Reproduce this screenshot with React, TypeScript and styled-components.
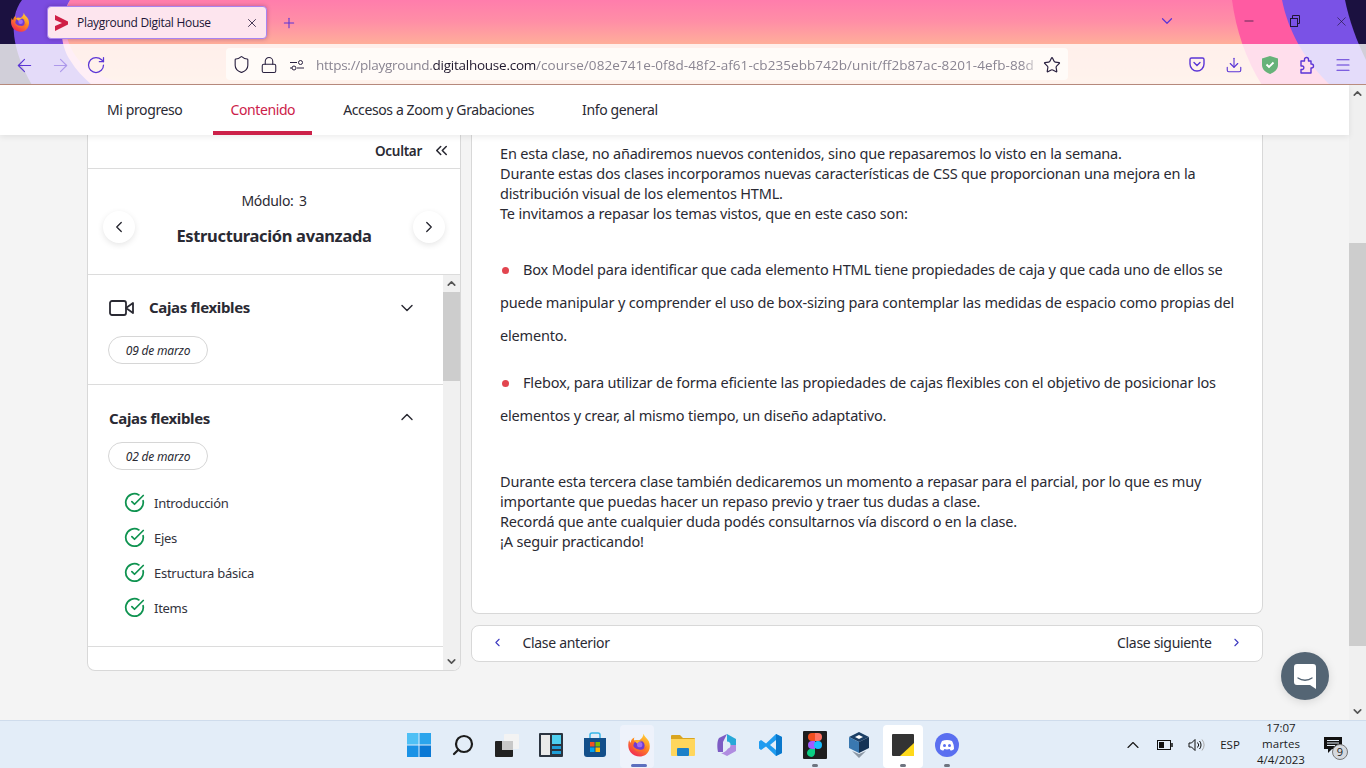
import React from 'react';
import styled, { createGlobalStyle } from 'styled-components';
import {
  ArrowLeft, ArrowRight, RotateCw, Shield, Lock, Star, Download, Menu, Plus, X, Minus,
  ChevronDown, ChevronUp, ChevronLeft, ChevronRight, ChevronsLeft, CircleCheckBig, Search,
} from 'lucide-react';

const GlobalStyle = createGlobalStyle`
  html, body { margin: 0; padding: 0; height: 100%; overflow: hidden; }
  body { font-family: 'Noto Sans', 'Open Sans', sans-serif; color: #2a2a33; background: #f4f4f4; }
  * { box-sizing: border-box; }
`;

const Screen = styled.div`
  position: relative;
  width: 1366px;
  height: 768px;
  display: flex;
  flex-direction: column;
  overflow: hidden;
`;

/* browser chrome */
const Chrome = styled.header`
  position: relative;
  height: 85px;
  flex: none;
  background: linear-gradient(180deg, #ff7dac 0%, #ff8ea6 25%, #ffae9a 52%, #ffc4a4 100%);
`;

const ThemeArt = styled.svg`
  position: absolute;
  inset: 0;
`;

const TabStrip = styled.div`
  position: relative;
  height: 44px;
  display: flex;
  align-items: center;
  padding-left: 47px;
`;

const FoxSlot = styled.div`
  position: absolute;
  left: 10px;
  top: 12px;
  width: 20px;
  height: 20px;
`;

const Tab = styled.div`
  width: 220px;
  height: 33px;
  margin-top: 1px;
  display: flex;
  align-items: center;
  padding: 0 7px 0 7px;
  background: #fde5ee;
  border: 1px solid #a884f0;
  border-radius: 4px;
  box-shadow: 0 0 4px rgba(60, 20, 90, 0.35);
  font-family: 'Open Sans', sans-serif;
  font-size: 12px;
  letter-spacing: -0.3px;
  color: #201536;
`;

const TabTitle = styled.span`
  flex: 1;
  margin-left: 9px;
`;

const NewTab = styled.div`
  display: flex;
  margin-left: 14px;
  margin-top: 1px;
  color: #5b35d6;
`;

const ListTabs = styled.div`
  display: flex;
  margin-left: 861px;
  margin-top: -2px;
  color: #5b35d6;
`;

const WindowControls = styled.div`
  position: absolute;
  right: 1px;
  top: 0;
  height: 42px;
  display: flex;
  align-items: center;
  color: #201536;
`;

const WinButton = styled.div`
  width: 46.5px;
  display: flex;
  justify-content: center;
`;

const Toolbar = styled.div`
  position: relative;
  height: 41px;
  display: flex;
  align-items: center;
  padding: 0 0 0 6px;
  background: rgba(255, 255, 255, 0.8);
  border-bottom: 1px solid #b98c7e;
`;

const NavButton = styled.div<{ $faded?: boolean }>`
  width: 36px;
  margin-top: 2px;
  display: flex;
  justify-content: center;
  color: #5b35d6;
  opacity: ${(p) => (p.$faded ? 0.4 : 1)};
`;

const UrlBar = styled.div`
  width: 842px;
  height: 32px;
  margin-left: 112px;
  display: flex;
  align-items: center;
  padding: 1px 7px 0 1px;
  background: #fffbf8;
  border-radius: 4px;
  color: #2a2140;
`;

const UrlIcon = styled.div`
  width: 28px;
  flex: none;
  display: flex;
  justify-content: center;
`;

const UrlText = styled.div`
  flex: 1;
  min-width: 0;
  margin-left: 5px;
  white-space: nowrap;
  overflow: hidden;
  font-family: 'Open Sans', sans-serif;
  font-size: 13.5px;
  letter-spacing: 0.07px;
  color: #8a8592;
  -webkit-mask-image: linear-gradient(90deg, #000 97%, transparent);
  mask-image: linear-gradient(90deg, #000 97%, transparent);
`;

const UrlOrigin = styled.span`
  letter-spacing: -0.25px;

  b {
    font-weight: 400;
    color: #20182e;
  }
`;

const ToolIcons = styled.div`
  display: flex;
  margin-top: 1px;
  margin-left: 111px;
  color: #5b35d6;
`;

const ToolIcon = styled.div`
  width: 36.5px;
  display: flex;
  justify-content: center;
`;

/* page */
const Page = styled.div`
  flex: 1;
  min-height: 0;
  display: flex;
`;

const Viewport = styled.main`
  flex: 1;
  min-width: 0;
  display: flex;
  flex-direction: column;
`;

const TopTabs = styled.nav`
  position: relative;
  z-index: 2;
  height: 50px;
  flex: none;
  display: flex;
  gap: 14px;
  padding-left: 90px;
  background: #fff;
  box-shadow: 0 2px 6px rgba(0, 0, 0, 0.08);
`;

const TopTab = styled.div<{ $active?: boolean }>`
  padding: 3px 17px 0;
  display: flex;
  align-items: center;
  font-size: 14px;
  letter-spacing: -0.39px;
  color: ${(p) => (p.$active ? '#cc2149' : '#2a2a33')};
  border-bottom: 4px solid ${(p) => (p.$active ? '#cc2149' : 'transparent')};
`;

const Columns = styled.div`
  flex: 1;
  min-height: 0;
  display: flex;
  gap: 10px;
  padding-left: 87px;
`;

const Sidebar = styled.aside`
  width: 374px;
  height: 536px;
  display: flex;
  flex-direction: column;
  background: #fff;
  border: 1px solid #d8d8d8;
  border-top: 0;
  border-radius: 0 0 8px 8px;
  overflow: hidden;
`;

const HideRow = styled.div`
  height: 34px;
  flex: none;
  display: flex;
  align-items: center;
  justify-content: flex-end;
  gap: 10px;
  padding: 0 9px 2px 0;
  border-bottom: 1px solid #dcdcdc;
  font-size: 13.5px;
  font-weight: 600;
  letter-spacing: -0.3px;
`;

const ModuleBox = styled.section`
  height: 106px;
  flex: none;
  display: flex;
  align-items: center;
  justify-content: space-between;
  padding: 0 15px 0 15px;
  border-bottom: 1px solid #dcdcdc;
`;

const ModuleText = styled.div`
  display: flex;
  flex-direction: column;
  align-items: center;
  gap: 14px;
  margin-top: -5px;
`;

const ModuleLabel = styled.div`
  font-size: 14px;
  letter-spacing: -0.3px;
  word-spacing: 2px;
`;

const ModuleName = styled.div`
  font-size: 16.5px;
  font-weight: 700;
  letter-spacing: -0.35px;
`;

const RoundButton = styled.div`
  width: 32px;
  height: 32px;
  margin-top: 11px;
  flex: none;
  display: flex;
  align-items: center;
  justify-content: center;
  border-radius: 50%;
  background: #fff;
  box-shadow: 0 2px 6px rgba(0, 0, 0, 0.1);
  color: #2a2a33;
`;

const ListArea = styled.div`
  flex: 1;
  min-height: 0;
  display: flex;
`;

const Accordion = styled.div`
  flex: 1;
  min-width: 0;
  overflow: hidden;
`;

const AccItem = styled.div<{ $height: number; $top: number }>`
  height: ${(p) => p.$height}px;
  padding: ${(p) => p.$top}px 26px 0 21px;
  border-bottom: 1px solid #dcdcdc;
`;

const AccHead = styled.div`
  height: 24px;
  display: flex;
  align-items: center;
  gap: 14px;
`;

const AccTitle = styled.div`
  flex: 1;
  font-size: 15px;
  font-weight: 700;
  letter-spacing: -0.33px;
  margin-top: -3px;
`;

const Caret = styled.div<{ $up?: boolean }>`
  display: flex;
  margin-top: ${(p) => (p.$up ? -4 : 0)}px;
`;

const DatePill = styled.div<{ $gap: number }>`
  width: 100px;
  height: 28px;
  margin: ${(p) => p.$gap}px 0 0 -1px;
  display: flex;
  align-items: center;
  justify-content: center;
  border: 1px solid #d6d6d6;
  border-radius: 14px;
  font-size: 12px;
  font-style: italic;
  letter-spacing: -0.2px;
`;

const Lessons = styled.ul`
  list-style: none;
  margin: 15px 0 0;
  padding: 0 0 0 15px;
`;

const Lesson = styled.li`
  height: 35px;
  display: flex;
  align-items: center;
  gap: 9px;
  font-size: 13px;
  letter-spacing: -0.28px;
  color: #33333d;
`;

const Track = styled.div<{ $width: number }>`
  width: ${(p) => p.$width}px;
  flex: none;
  display: flex;
  flex-direction: column;
  background: #f0f0f0;
`;

const Arrow = styled.div`
  height: 17px;
  flex: none;
  display: flex;
  align-items: center;
  justify-content: center;
  color: #555;
`;

const Thumb = styled.div<{ $top: number; $height: number }>`
  height: ${(p) => p.$height}px;
  margin-top: ${(p) => p.$top}px;
  flex: none;
  background: #cdcdcd;
`;

const Spacer = styled.div`
  flex: 1;
`;

const Content = styled.div`
  width: 792px;
  display: flex;
  flex-direction: column;
  gap: 11px;
`;

const Card = styled.article`
  height: 479px;
  flex: none;
  padding: 8px 26px 0 28px;
  background: #fff;
  border: 1px solid #d8d8d8;
  border-top: 0;
  border-radius: 0 0 8px 8px;
  font-size: 14.5px;
  line-height: 20px;
  letter-spacing: -0.18px;
`;

const Paragraph = styled.p<{ $after: number }>`
  margin: 0 0 ${(p) => p.$after}px;
`;

const BulletList = styled.ul`
  list-style: none;
  margin: 0 0 39px;
  padding: 0;
`;

const BulletItem = styled.li`
  line-height: 33px;
  margin-bottom: 14px;

  &::before {
    content: '';
    display: inline-block;
    width: 7px;
    height: 7px;
    margin: 0 14px 1px 2px;
    border-radius: 50%;
    background: #e2454f;
  }
`;

const Pager = styled.div`
  width: 792px;
  height: 37px;
  flex: none;
  display: flex;
  align-items: center;
  justify-content: space-between;
  padding: 0 19px 2px;
  background: #fff;
  border: 1px solid #d8d8d8;
  border-radius: 8px;
  font-size: 14px;
  letter-spacing: -0.32px;
`;

const PagerLink = styled.div`
  display: flex;
  align-items: center;
  gap: 18.5px;
  color: #2a2a33;

  svg {
    color: #3d3ac0;
  }
`;

const ChatBubble = styled.div`
  position: absolute;
  left: 1281px;
  top: 652px;
  width: 48px;
  height: 48px;
  display: flex;
  align-items: center;
  justify-content: center;
  border-radius: 50%;
  background: #546574;
  box-shadow: 0 2px 10px rgba(0, 0, 0, 0.12);
`;

/* taskbar */
const Taskbar = styled.footer`
  height: 48px;
  flex: none;
  position: relative;
  display: flex;
  justify-content: center;
  background: #e3edf8;
  border-top: 1px solid #cfdcec;
`;

const TaskIcons = styled.div`
  display: flex;
  align-items: stretch;
`;

const TaskIcon = styled.div<{ $state?: 'focus' | 'white' }>`
  position: relative;
  width: 44px;
  display: flex;
  align-items: center;
  justify-content: center;

  &::before {
    content: '';
    display: ${(p) => (p.$state ? 'block' : 'none')};
    position: absolute;
    left: ${(p) => (p.$state === 'focus' ? 3 : 2)}px;
    right: ${(p) => (p.$state === 'focus' ? 7 : 2)}px;
    top: 4px;
    bottom: 0;
    border-radius: 4px;
    background: ${(p) => (p.$state === 'focus' ? '#eef2fb' : '#fff')};
  }

  svg {
    position: relative;
  }
`;

const MirrorSearch = styled(Search)`
  transform: scaleX(-1);
`;

const RunDot = styled.span<{ $wide?: boolean }>`
  position: absolute;
  left: 50%;
  bottom: 1px;
  width: ${(p) => (p.$wide ? 16 : 6)}px;
  height: 3px;
  transform: translateX(-50%);
  border-radius: 2px;
  background: ${(p) => (p.$wide ? '#5c6fbf' : '#6e7480')};
`;

const Tray = styled.div`
  position: absolute;
  right: 13px;
  top: 0;
  bottom: 0;
  display: flex;
  align-items: center;
  font-family: 'Open Sans', sans-serif;
  font-size: 11.5px;
  color: #1b1b1b;
`;

const TrayIcon = styled.div<{ $width: number }>`
  width: ${(p) => p.$width}px;
  display: flex;
  justify-content: center;
`;

const Clock = styled.div`
  width: 64px;
  margin-top: -1px;
  text-align: center;
  line-height: 16px;
`;

const Notify = styled.div`
  position: relative;
  width: 40px;
  height: 16px;
  display: flex;
  justify-content: center;
`;

const NotifyCount = styled.span`
  position: absolute;
  left: 19px;
  top: 7px;
  width: 16px;
  height: 16px;
  display: flex;
  align-items: center;
  justify-content: center;
  border: 1px solid #777;
  border-radius: 50%;
  background: #d5d9df;
  font-size: 11px;
`;

const ScrollBar = ({ width, top, height }: { width: number; top: number; height: number }) => (
  <Track $width={width}>
    <Arrow><ChevronUp size={13} strokeWidth={3} /></Arrow>
    <Thumb $top={top} $height={height} />
    <Spacer />
    <Arrow><ChevronDown size={13} strokeWidth={3} /></Arrow>
  </Track>
);

const FirefoxLogo = ({ size, uid }: { size: number; uid: string }) => (
  <svg width={size} height={size} viewBox="0 0 32 32">
    <defs>
      <linearGradient id={uid} x1="0.8" y1="0" x2="0.2" y2="1">
        <stop offset="0" stopColor="#ffd23a" />
        <stop offset="0.45" stopColor="#ff8a1f" />
        <stop offset="1" stopColor="#f01f5a" />
      </linearGradient>
    </defs>
    <path d="M22 1c1 4 5 6 7 10 3 7 1 14-4 18-6 4-15 3-20-3C1 21 1 14 3 9c0 2 1 3 2 4 0-3 2-6 5-7-1 2-1 3 0 4 2-1 4-1 6 0 3-2 6-5 6-9z" fill={`url(#${uid})`} />
    <circle cx="16" cy="17" r="7.5" fill="#6f3bd1" />
    <circle cx="17" cy="15.5" r="3.6" fill="#a06cf0" />
    <path d="M7 16c1 7 8 11 14 8 3-1 5-4 5-7-2 4-6 6-10 5-4 0-7-3-9-6z" fill="#ff6b2a" />
    <path d="M10 10c3-1 7-1 10 1-3 0-5 1-6 3-2-1-3-2-4-4z" fill="#ffb52e" />
  </svg>
);

const Sticky = () => (
  <svg width="22" height="22" viewBox="0 0 22 22">
    <rect width="22" height="22" rx="1" fill="#333" />
    <path d="M22 9v13H8z" fill="#ffd91a" />
  </svg>
);

export default function App() {
  return (
    <Screen>
      <GlobalStyle />
      <Chrome>
        <ThemeArt width="1366" height="85" viewBox="0 0 1366 85">
          <path d="M70 0C64 12 62 30 72 50c8 16 26 28 58 35H0V0z" fill="#ffb0d2" />
          <path d="M70 0C58 20 60 45 70 60c6 10 14 18 22 25H0V0z" fill="#7b4ce0" />
          <path d="M22 0C8 18 12 50 32 85H0V0z" fill="#1b1140" />
          <path d="M1232 0c4 30 14 60 30 85h104V0z" fill="#ff5ba2" />
          <path d="M1282 0c6 30 22 60 48 85h36V0z" fill="#7a52e6" />
          <path d="M1345 0c4 20 12 42 21 60V0z" fill="#1b1140" />
        </ThemeArt>
        <TabStrip>
          <FoxSlot><FirefoxLogo size={20} uid="fox-top" /></FoxSlot>
          <Tab>
            <svg width="13" height="16" viewBox="0 0 13 16">
              <path d="M0 0l13 6.500v3L0 16v-5l7-3-7-3z" fill="#cf1f45" />
            </svg>
            <TabTitle>Playground Digital House</TabTitle>
            <X size={14} strokeWidth={1.4} />
          </Tab>
          <NewTab><Plus size={16} strokeWidth={1.6} /></NewTab>
          <ListTabs><ChevronDown size={18} strokeWidth={1.6} /></ListTabs>
          <WindowControls>
            <WinButton><Minus size={14} strokeWidth={1.2} /></WinButton>
            <WinButton>
              <svg width="12" height="14" viewBox="0 0 12 14" fill="none" stroke="currentColor">
                <rect x="1.500" y="4.500" width="7" height="8" />
                <path d="M3.500 4.500v-3h7v8h-2" />
              </svg>
            </WinButton>
            <WinButton><X size={15} strokeWidth={1} /></WinButton>
          </WindowControls>
        </TabStrip>
        <Toolbar>
          <NavButton><ArrowLeft size={21} strokeWidth={1.3} /></NavButton>
          <NavButton $faded><ArrowRight size={21} strokeWidth={1.3} /></NavButton>
          <NavButton><RotateCw size={20} strokeWidth={1.5} /></NavButton>
          <UrlBar>
            <UrlIcon><Shield size={19} strokeWidth={1.4} /></UrlIcon>
            <UrlIcon><Lock size={18} strokeWidth={1.4} /></UrlIcon>
            <UrlIcon>
              <svg width="14" height="12" viewBox="0 0 14 12" fill="none" stroke="currentColor">
                <path d="M0 3.500h7M0 9h2" />
                <circle cx="10.500" cy="3.500" r="2" />
                <circle cx="4" cy="9" r="2" />
                <path d="M7 9h7" />
              </svg>
            </UrlIcon>
            <UrlText>
              <UrlOrigin>https://playground.<b>digitalhouse.com</b></UrlOrigin>/course/082e741e-0f8d-48f2-af61-cb235ebb742b/unit/ff2b87ac-8201-4efb-88d
            </UrlText>
            <Star size={18} strokeWidth={1.6} />
          </UrlBar>
          <ToolIcons>
            <ToolIcon>
              <svg width="16" height="16" viewBox="0 0 16 16" fill="none" stroke="currentColor" strokeWidth="1.400">
                <path d="M2.500 2h11A1.500 1.500 0 0 1 15 3.500V8A7 7 0 0 1 1 8V3.500A1.500 1.500 0 0 1 2.500 2z" />
                <path d="M5 6.500l3 3 3-3" strokeLinecap="round" />
              </svg>
            </ToolIcon>
            <ToolIcon><Download size={18} strokeWidth={1.5} /></ToolIcon>
            <ToolIcon>
              <svg width="16" height="18" viewBox="0 0 16 18">
                <path d="M8 0l8 2.500V9c0 4-3.500 7.500-8 9-4.500-1.500-8-5-8-9V2.500z" fill="#67b279" />
                <path d="M4.500 8.500l2.500 2.500 4.500-4.500" fill="none" stroke="#fff" strokeWidth="1.800" />
              </svg>
            </ToolIcon>
            <ToolIcon>
              <svg width="16" height="18" viewBox="0 0 16 18" fill="none" stroke="currentColor" strokeWidth="1.400" strokeLinejoin="round">
                <path d="M2 5h3.500V3.500a2 2 0 0 1 4 0V5H12v3h.5a2 2 0 0 1 0 4H12v5H2v-3.500h1.500a1.800 1.800 0 0 0 0-3.500H2z" />
              </svg>
            </ToolIcon>
            <ToolIcon><Menu size={18} strokeWidth={1.5} /></ToolIcon>
          </ToolIcons>
        </Toolbar>
      </Chrome>

      <Page>
        <Viewport>
          <TopTabs>
            <TopTab>Mi progreso</TopTab>
            <TopTab $active>Contenido</TopTab>
            <TopTab>Accesos a Zoom y Grabaciones</TopTab>
            <TopTab>Info general</TopTab>
          </TopTabs>
          <Columns>
            <Sidebar>
              <HideRow>
                Ocultar
                <ChevronsLeft size={19} strokeWidth={2} />
              </HideRow>
              <ModuleBox>
                <RoundButton><ChevronLeft size={18} strokeWidth={1.8} /></RoundButton>
                <ModuleText>
                  <ModuleLabel>Módulo: 3</ModuleLabel>
                  <ModuleName>Estructuración avanzada</ModuleName>
                </ModuleText>
                <RoundButton><ChevronRight size={18} strokeWidth={1.8} /></RoundButton>
              </ModuleBox>
              <ListArea>
                <Accordion>
                  <AccItem $height={110} $top={21}>
                    <AccHead>
                      <svg width="26" height="18" viewBox="0 0 26 18" fill="none" stroke="#2a2a33" strokeWidth="1.800" strokeLinejoin="round">
                        <rect x="1" y="2" width="16" height="14" rx="2" />
                        <path d="M17 9l7-5v10z" />
                      </svg>
                      <AccTitle>Cajas flexibles</AccTitle>
                      <Caret><ChevronDown size={20} strokeWidth={1.7} /></Caret>
                    </AccHead>
                    <DatePill $gap={16}>09 de marzo</DatePill>
                  </AccItem>
                  <AccItem $height={262} $top={22}>
                    <AccHead>
                      <AccTitle>Cajas flexibles</AccTitle>
                      <Caret $up><ChevronUp size={20} strokeWidth={1.7} /></Caret>
                    </AccHead>
                    <DatePill $gap={11}>02 de marzo</DatePill>
                    <Lessons>
                      {['Introducción', 'Ejes', 'Estructura básica', 'Items'].map((name) => (
                        <Lesson key={name}>
                          <CircleCheckBig size={21} strokeWidth={2} color="#0f9350" />
                          {name}
                        </Lesson>
                      ))}
                    </Lessons>
                  </AccItem>
                </Accordion>
                <ScrollBar width={17} top={0} height={89} />
              </ListArea>
            </Sidebar>
            <Content>
              <Card>
                <Paragraph $after={30}>
                  En esta clase, no añadiremos nuevos contenidos, sino que repasaremos lo visto en la semana.<br />
                  Durante estas dos clases incorporamos nuevas características de CSS que proporcionan una mejora en la distribución visual de los elementos HTML.<br />
                  Te invitamos a repasar los temas vistos, que en este caso son:
                </Paragraph>
                <BulletList>
                  <BulletItem>Box Model para identificar que cada elemento HTML tiene propiedades de caja y que cada uno de ellos se puede manipular y comprender el uso de box-sizing para contemplar las medidas de espacio como propias del elemento.</BulletItem>
                  <BulletItem>Flebox, para utilizar de forma eficiente las propiedades de cajas flexibles con el objetivo de posicionar los elementos y crear, al mismo tiempo, un diseño adaptativo.</BulletItem>
                </BulletList>
                <Paragraph $after={0}>
                  Durante esta tercera clase también dedicaremos un momento a repasar para el parcial, por lo que es muy importante que puedas hacer un repaso previo y traer tus dudas a clase.<br />
                  Recordá que ante cualquier duda podés consultarnos vía discord o en la clase.<br />
                  ¡A seguir practicando!
                </Paragraph>
              </Card>
              <Pager>
                <PagerLink><ChevronLeft size={13} strokeWidth={2} />Clase anterior</PagerLink>
                <PagerLink>Clase siguiente<ChevronRight size={13} strokeWidth={2} /></PagerLink>
              </Pager>
            </Content>
          </Columns>
        </Viewport>
        <ScrollBar width={17} top={141} height={403} />
      </Page>

      <ChatBubble>
        <svg width="22" height="25" viewBox="0 0 22 25">
          <path d="M3 0h16a3 3 0 0 1 3 3v22l-6-4H3a3 3 0 0 1-3-3V3a3 3 0 0 1 3-3z" fill="#fff" />
          <path d="M4 14c4 3 10 3 14 0" fill="none" stroke="#546574" strokeWidth="1.300" strokeLinecap="round" />
        </svg>
      </ChatBubble>

      <Taskbar>
        <TaskIcons>
          <TaskIcon>
            <svg width="24" height="24" viewBox="0 0 24 24">
              <rect width="11.500" height="11.500" fill="#4fc0f5" />
              <rect x="12.500" width="11.500" height="11.500" fill="#2ba4ec" />
              <rect y="12.500" width="11.500" height="11.500" fill="#1a92e6" />
              <rect x="12.500" y="12.500" width="11.500" height="11.500" fill="#0b78d4" />
            </svg>
          </TaskIcon>
          <TaskIcon><MirrorSearch size={24} strokeWidth={2.2} color="#1c1c1c" /></TaskIcon>
          <TaskIcon>
            <svg width="24" height="24" viewBox="0 0 24 24">
              <rect x="9" y="1" width="15" height="15" rx="1" fill="#f3f3f3" />
              <rect x="0" y="8" width="18" height="16" rx="1" fill="#222" />
              <rect x="7" y="8" width="11" height="9" fill="#c8c8c8" />
            </svg>
          </TaskIcon>
          <TaskIcon>
            <svg width="24" height="24" viewBox="0 0 24 24">
              <rect width="24" height="24" rx="1" fill="#2b3440" />
              <rect x="2" y="2" width="9" height="20" fill="#e9e9e9" />
              <rect x="13" y="2" width="9" height="9" fill="#4fd0f0" />
              <rect x="13" y="13" width="9" height="3" fill="#1f9fd8" />
              <rect x="13" y="18" width="9" height="3" fill="#1f9fd8" />
            </svg>
          </TaskIcon>
          <TaskIcon>
            <svg width="24" height="26" viewBox="0 0 24 26">
              <path d="M7 6V3a2 2 0 0 1 2-2h6a2 2 0 0 1 2 2v3" fill="none" stroke="#38b6e8" strokeWidth="1.500" />
              <path d="M1 6h22v16a3 3 0 0 1-3 3H4a3 3 0 0 1-3-3z" fill="#134f8a" />
              <rect x="7" y="10" width="4.500" height="4.500" fill="#f25022" />
              <rect x="12.500" y="10" width="4.500" height="4.500" fill="#7fba00" />
              <rect x="7" y="15.500" width="4.500" height="4.500" fill="#00a4ef" />
              <rect x="12.500" y="15.500" width="4.500" height="4.500" fill="#ffb900" />
            </svg>
          </TaskIcon>
          <TaskIcon $state="focus">
            <FirefoxLogo size={24} uid="fox-bar" />
            <RunDot $wide />
          </TaskIcon>
          <TaskIcon>
            <svg width="24" height="24" viewBox="0 0 24 24">
              <path d="M0 3a1 1 0 0 1 1-1h8l3 3h11a1 1 0 0 1 1 1v3H0z" fill="#d9a520" />
              <path d="M0 6h24v16a1 1 0 0 1-1 1H1a1 1 0 0 1-1-1z" fill="#ffd65c" />
              <rect x="6" y="15" width="12" height="8" rx="1" fill="#1c80c8" />
            </svg>
          </TaskIcon>
          <TaskIcon>
            <svg width="22" height="24" viewBox="0 0 22 24">
              <path d="M11 1l9 5v6h-6l-3-3z" fill="#28a8d8" />
              <path d="M11 1L3 5C1 8 1 14 2 19l5 0V9z" fill="#7d5cc4" />
              <path d="M14 12h6v6l-9 5-6-3c3 0 6-2 9-8z" fill="#b08ce0" />
              <circle cx="11" cy="12" r="3.500" fill="#e3edf8" />
            </svg>
          </TaskIcon>
          <TaskIcon>
            <svg width="24" height="24" viewBox="0 0 24 24">
              <path d="M17 1l6 3v16l-6 3-10-9.500L2 17l-2-1.500v-7L2 7l5 3.500z" fill="#1f9cf0" />
              <path d="M17 7l-6 5 6 5z" fill="#e3edf8" />
              <path d="M17 1l6 3v16l-6 3z" fill="#0a78cc" />
            </svg>
          </TaskIcon>
          <TaskIcon>
            <svg width="24" height="28" viewBox="0 0 24 28">
              <rect width="24" height="28" rx="1" fill="#1e1e1e" />
              <path d="M12 2H9a4 4 0 0 0 0 8h3z" fill="#f24e1e" />
              <path d="M12 2h3a4 4 0 0 1 0 8h-3z" fill="#ff7262" />
              <path d="M12 10H9a4 4 0 0 0 0 8h3z" fill="#a259ff" />
              <circle cx="15" cy="14" r="4" fill="#1abcfe" />
              <path d="M9 18h3v4a4 4 0 1 1-3-4z" fill="#0acf83" />
            </svg>
            <RunDot />
          </TaskIcon>
          <TaskIcon>
            <svg width="22" height="28" viewBox="0 0 22 28">
              <path d="M11 1l10 5-10 5L1 6z" fill="#1c3f66" />
              <path d="M1 6l10 5v11L1 17z" fill="#3a78b0" />
              <path d="M21 6L11 11v11l10-5z" fill="#163456" />
              <path d="M4 20l7 7 7-7-7 3z" fill="#8d98a5" />
              <path d="M11 4l4 2-4 2-4-2z" fill="#fff" />
            </svg>
          </TaskIcon>
          <TaskIcon $state="white">
            <Sticky />
            <RunDot />
          </TaskIcon>
          <TaskIcon>
            <svg width="24" height="24" viewBox="0 0 24 24">
              <circle cx="12" cy="12" r="12" fill="#5a6ff0" />
              <path d="M7 8c3-1.500 7-1.500 10 0 1.500 2.500 2 5 2 8-1 1-2.500 1.500-3.500 1.500l-.8-1.500c-1.700.5-3.700.5-5.400 0l-.8 1.500C7.500 17.500 6 17 5 16c0-3 .5-5.500 2-8z" fill="#fff" />
              <circle cx="9.500" cy="12.500" r="1.500" fill="#5a6ff0" />
              <circle cx="14.500" cy="12.500" r="1.500" fill="#5a6ff0" />
            </svg>
            <RunDot />
          </TaskIcon>
        </TaskIcons>
        <Tray>
          <TrayIcon $width={32}><ChevronUp size={20} strokeWidth={1.4} /></TrayIcon>
          <TrayIcon $width={32}>
            <svg width="16" height="10" viewBox="0 0 16 10" fill="none" stroke="#111">
              <rect x="0.500" y="0.500" width="13" height="9" />
              <rect x="2" y="2" width="5" height="6" fill="#111" stroke="none" />
              <path d="M15 3v4" strokeWidth="1.500" />
            </svg>
          </TrayIcon>
          <TrayIcon $width={30}>
            <svg width="17" height="14" viewBox="0 0 17 14" fill="none" stroke="#111">
              <path d="M1 5h2.500L7 1.500v11L3.500 9H1z" />
              <path d="M9.500 4.500a3.500 3.500 0 0 1 0 5M11.500 3a6 6 0 0 1 0 8" />
              <path d="M14 1.500a9 9 0 0 1 0 11" stroke="#aaa" />
            </svg>
          </TrayIcon>
          <TrayIcon $width={38}>ESP</TrayIcon>
          <Clock>17:07<br />martes<br />4/4/2023</Clock>
          <Notify>
            <svg width="18" height="16" viewBox="0 0 18 16">
              <path d="M0 0h18v12H8l-4 4v-4H0z" fill="#111" />
              <path d="M3 3.500h12M3 6h12M3 8.500h8" stroke="#e3edf8" />
            </svg>
            <NotifyCount>9</NotifyCount>
          </Notify>
        </Tray>
      </Taskbar>
    </Screen>
  );
}
